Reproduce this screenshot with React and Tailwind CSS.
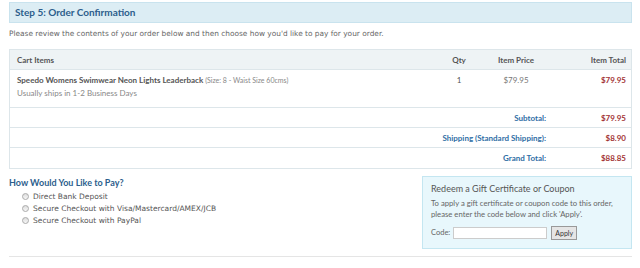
export default function App() {
  const lato = { fontFamily: "Lato, 'Open Sans', sans-serif" };
  return (
    <div className="w-[640px] h-[268px] bg-white overflow-hidden" style={{ fontFamily: "'DejaVu Sans', Verdana, sans-serif" }}>
      <div className="pl-[9px] pr-[8px] pt-[2px]">
        <div className="h-[21px] bg-[#dcedf4] border border-[#c9e3ee] flex items-center pl-[5px]">
          <span className="text-[10px] font-bold text-[#2c5e8c]" style={lato}>Step 5: Order Confirmation</span>
        </div>
        <p className="text-[7.4px] text-[#666] mt-[6px] leading-[9px]">Please review the contents of your order below and then choose how you'd like to pay for your order.</p>
        <div className="mt-[11px] border border-[#dde6ea]" style={lato}>
          <div className="h-[20px] bg-[#eef3f5] flex items-center text-[8px] font-bold text-[#555] border-b border-[#dde6ea]">
            <div className="flex-1 pl-[7px]">Cart Items</div>
            <div className="w-[30px] text-center">Qty</div>
            <div className="w-[70px] text-center ml-[7px]">Item Price</div>
            <div className="w-[80px] text-right pr-[5px]">Item Total</div>
          </div>
          <div className="h-[38px] flex items-start text-[8px] border-b border-[#dde6ea] pt-[5px]">
            <div className="flex-1 pl-[7px]">
              <div className="font-bold text-[#555] leading-[10px]">Speedo Womens Swimwear Neon Lights Leaderback <span className="font-normal text-[7px] text-[#888]">(Size: 8 - Waist Size 60cms)</span></div>
              <div className="text-[#888] leading-[10px] mt-[3px]">Usually ships in 1-2 Business Days</div>
            </div>
            <div className="w-[30px] text-center text-[#555] leading-[10px]">1</div>
            <div className="w-[70px] text-center ml-[7px] text-[#777] leading-[10px]">$79.95</div>
            <div className="w-[80px] text-right pr-[5px] font-bold text-[#a33535] leading-[10px]">$79.95</div>
          </div>
          {[
            ["Subtotal:", "$79.95", "h-[20px] border-b border-[#dde6ea]"],
            ["Shipping (Standard Shipping):", "$8.90", "h-[20px] border-b border-[#dde6ea]"],
            ["Grand Total:", "$88.85", "h-[20px]"],
          ].map(([l, v, c]) => (
            <div key={l} className={`flex items-center text-[8px] font-bold ${c}`}>
              <div className="flex-1 text-right text-[#2f6ea5] pr-[25px]">{l}</div>
              <div className="w-[60px] text-right pr-[5px] text-[#a33535]">{v}</div>
            </div>
          ))}
        </div>
        <div className="flex mt-[6px] justify-between">
          <div>
            <div className="text-[9px] font-bold text-[#2c5e8c] mt-[1px]" style={lato}>How Would You Like to Pay?</div>
            <div className="pl-[13px] mt-[1px] text-[7.5px] text-[#555]">
              {["Direct Bank Deposit", "Secure Checkout with Visa/Mastercard/AMEX/JCB", "Secure Checkout with PayPal"].map((t) => (
                <div key={t} className="flex items-center h-[12px]">
                  <span className="w-[7px] h-[7px] rounded-full border border-[#aaa] bg-gradient-to-b from-[#ddd] to-[#f7f7f7] mr-[4px]"></span>
                  {t}
                </div>
              ))}
            </div>
          </div>
          <div className="w-[210px] h-[73px] mt-[1px] bg-[#e8f7fc] border border-[#c4e6f1] px-[8px] pt-[6px]" style={lato}>
            <div className="text-[9px] text-[#555] leading-[11px]">Redeem a Gift Certificate or Coupon</div>
            <div className="text-[7.7px] text-[#666] leading-[11px] mt-[4px]">To apply a gift certificate or coupon code to this order, please enter the code below and click 'Apply'.</div>
            <div className="flex items-center mt-[6px] text-[7.5px] text-[#666]">
              <span>Code:</span>
              <span className="ml-[3px] w-[94px] h-[12px] bg-white border border-[#ccc]"></span>
              <span className="ml-[4px] h-[14px] px-[3px] border border-[#999] bg-[#e5e5e5] text-[#333] flex items-center text-[7px]">Apply</span>
            </div>
          </div>
        </div>
        <div className="mt-[7px] border-t border-[#e5e5e5]"></div>
      </div>
    </div>
  );
}
